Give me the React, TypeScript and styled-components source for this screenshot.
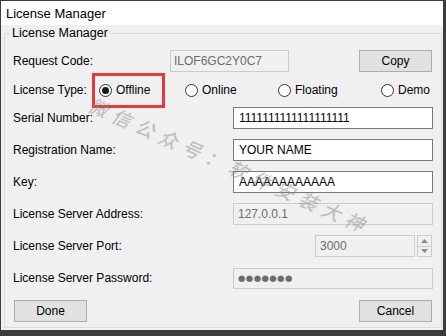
import styled, { createGlobalStyle } from 'styled-components';

const GlobalStyle = createGlobalStyle`
  html, body {
    margin: 0;
    padding: 0;
    width: 446px;
    height: 336px;
    overflow: hidden;
    background: #3c3c3c;
  }
  body {
    font-family: 'Liberation Sans', Arial, sans-serif;
    font-size: 12px;
    color: #000;
  }
`;

const App = () => {
  return (
    <>
      <GlobalStyle />
      <Dialog>
        <TitleBar>License Manager</TitleBar>
        <GroupBox>
          <Legend>License Manager</Legend>
          <Row $gap={9}>
            <Label $width={157}>Request Code:</Label>
            <Field $width={119} $disabled $pad={3} readOnly value="ILOF6GC2Y0C7" />
            <Button $push>Copy</Button>
          </Row>
          <Row $gap={7}>
            <Label $width={86}>License Type:</Label>
            <RadioGroup>
              <RadioItem $highlight>
                <Circle $checked />
                Offline
              </RadioItem>
              <RadioItem>
                <Circle />
                Online
              </RadioItem>
              <RadioItem>
                <Circle />
                Floating
              </RadioItem>
              <RadioItem>
                <Circle />
                Demo
              </RadioItem>
            </RadioGroup>
          </Row>
          <Row $gap={6}>
            <Label>Serial Number:</Label>
            <Field $width={200} $push readOnly value="1111111111111111111" />
          </Row>
          <Row>
            <Label>Registration Name:</Label>
            <Field $width={200} $push readOnly value="YOUR NAME" />
          </Row>
          <Row>
            <Label>Key:</Label>
            <Field $width={200} $push readOnly value="AAAAAAAAAAAA" />
          </Row>
          <Row>
            <Label>License Server Address:</Label>
            <Field $width={200} $push $disabled readOnly value="127.0.0.1" />
          </Row>
          <Row>
            <Label>License Server Port:</Label>
            <Field $width={100} $push $disabled readOnly value="3000" />
            <Spin>
              <SpinHalf>
                <svg width="7" height="4" viewBox="0 0 7 4">
                  <path d="M0 4 L3.5 0 L7 4 Z" fill="#8a8a8a" />
                </svg>
              </SpinHalf>
              <SpinHalf>
                <svg width="7" height="4" viewBox="0 0 7 4">
                  <path d="M0 0 L3.5 4 L7 0 Z" fill="#8a8a8a" />
                </svg>
              </SpinHalf>
            </Spin>
          </Row>
          <Row>
            <Label>License Server Password:</Label>
            <Dots>●●●●●●●</Dots>
          </Row>
          <ButtonRow>
            <Button>Done</Button>
            <Button>Cancel</Button>
          </ButtonRow>
        </GroupBox>
        <Watermark>微信公众号：软件安装大神</Watermark>
      </Dialog>
    </>
  );
};

export default App;

const Dialog = styled.div`
  position: relative;
  margin: 1px 0 0 1px;
  width: 442px;
  height: 329px;
  background-color: #f0f0f0;
  display: flex;
  flex-direction: column;
`;

const TitleBar = styled.div`
  height: 24px;
  flex: none;
  background-color: #ffffff;
  display: flex;
  align-items: center;
  padding-left: 5px;
  font-size: 13px;
`;

const GroupBox = styled.fieldset`
  flex: 1;
  min-width: 0;
  margin: 0 1px 2px 3px;
  padding: 0 8px;
  border: 1px solid #dcdcdc;
  display: flex;
  flex-direction: column;
`;

const Legend = styled.legend`
  font-size: 12.5px;
  line-height: 16px;
  padding: 0 2px;
  margin-left: -3px;
`;

const Row = styled.div<{ $gap?: number }>`
  display: flex;
  align-items: center;
  height: 22px;
  flex: none;
  margin-top: ${(p) => p.$gap ?? 10}px;
`;

const Label = styled.span<{ $width?: number }>`
  flex: none;
  width: ${(p) => (p.$width ? `${p.$width}px` : 'auto')};
  line-height: 16px;
`;

const Field = styled.input<{ $width: number; $disabled?: boolean; $push?: boolean; $pad?: number }>`
  box-sizing: border-box;
  width: ${(p) => p.$width}px;
  height: 22px;
  margin: 0 0 0 ${(p) => (p.$push ? 'auto' : '0')};
  padding: 0 ${(p) => p.$pad ?? (p.$disabled ? 4 : 5)}px;
  border: 1px solid ${(p) => (p.$disabled ? '#cccccc' : '#7a7a7a')};
  background-color: ${(p) => (p.$disabled ? '#f0f0f0' : '#ffffff')};
  color: ${(p) => (p.$disabled ? '#6d6d6d' : '#000000')};
  font-family: 'Liberation Sans', Arial, sans-serif;
  font-size: 12px;
  outline: none;
`;

const Dots = styled.div`
  box-sizing: border-box;
  width: 200px;
  height: 21px;
  margin-left: auto;
  padding: 0 4px;
  border: 1px solid #cccccc;
  background-color: #f0f0f0;
  color: #6d6d6d;
  font-family: 'DejaVu Sans', sans-serif;
  font-size: 8.5px;
  letter-spacing: 0.4px;
  display: flex;
  align-items: center;
`;

const Button = styled.button<{ $push?: boolean }>`
  box-sizing: border-box;
  width: 73px;
  height: 22px;
  margin-left: ${(p) => (p.$push ? 'auto' : '0')};
  margin-right: 1px;
  padding: 0;
  background-color: #e1e1e1;
  border: 1px solid #adadad;
  font-family: 'Liberation Sans', Arial, sans-serif;
  font-size: 12px;
  color: #000;
`;

const ButtonRow = styled.div`
  display: flex;
  justify-content: space-between;
  margin-top: 11px;
  padding-left: 1px;
`;

const RadioGroup = styled.div`
  flex: 1;
  display: grid;
  grid-template-columns: 86px 93px 103px auto;
  align-items: center;
`;

const RadioItem = styled.label<{ $highlight?: boolean }>`
  position: relative;
  display: inline-flex;
  align-items: center;
  gap: 4px;
  line-height: 16px;
  justify-self: start;

  &::after {
    content: '';
    display: ${(p) => (p.$highlight ? 'block' : 'none')};
    position: absolute;
    left: -7px;
    top: -9px;
    width: 73px;
    height: 35px;
    box-sizing: border-box;
    border: 3px solid #e8383d;
  }
`;

const Circle = styled.span<{ $checked?: boolean }>`
  box-sizing: border-box;
  width: 13px;
  height: 13px;
  border-radius: 50%;
  border: 1px solid #333333;
  background-color: #ffffff;
  display: flex;
  align-items: center;
  justify-content: center;

  &::after {
    content: '';
    display: ${(p) => (p.$checked ? 'block' : 'none')};
    width: 7px;
    height: 7px;
    border-radius: 50%;
    background-color: #1a1a1a;
  }
`;

const Spin = styled.div`
  box-sizing: border-box;
  width: 15px;
  height: 22px;
  margin-left: 2px;
  margin-right: 1px;
  display: flex;
  flex-direction: column;
  border: 1px solid #cccccc;
`;

const SpinHalf = styled.div`
  flex: 1;
  display: flex;
  align-items: center;
  justify-content: center;
  background-color: #f0f0f0;

  & + & {
    border-top: 1px solid #cccccc;
  }
`;

const Watermark = styled.div`
  position: absolute;
  left: 229px;
  top: 164px;
  transform: translate(-50%, -50%) rotate(24deg);
  white-space: nowrap;
  pointer-events: none;
  font-family: 'Noto Sans CJK SC', sans-serif;
  font-size: 19px;
  font-weight: 500;
  font-style: italic;
  letter-spacing: 6.5px;
  color: rgba(130, 130, 130, 0.45);
`;
